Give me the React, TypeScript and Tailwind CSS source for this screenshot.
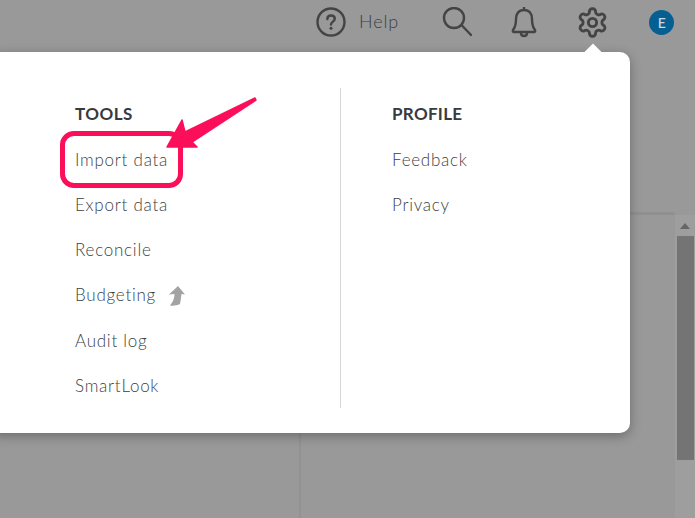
const tools = ["Import data", "Export data", "Reconcile", "Budgeting", "Audit log", "SmartLook"];
const profile = ["Feedback", "Privacy"];

function MenuItem({ label }: { label: string }) {
  return (
    <li className="flex h-[45.2px] items-center text-[17px] font-light tracking-[0.75px] text-[#3c3f43]">
      {label}
      {label === "Budgeting" && (
        <svg width="17" height="20" viewBox="0 0 17 20" className="ml-[12px] mt-[1px]">
          <path d="M10 0 L17 8.500 L13.500 8 C13 12 12.500 15 12 18 C9 19.500 5 20 2 19.500 C5 16 6.500 12 6.500 8 L1 8.500 Z" fill="#a3a3a3" />
        </svg>
      )}
    </li>
  );
}

export default function App() {
  return (
    <div className="relative h-[518px] w-[695px] overflow-hidden bg-[#999999] font-['Lato',sans-serif]">
      <header className="flex h-[44px] items-center">
        <div className="ml-[316px] flex items-center">
          <svg width="30" height="30" viewBox="0 0 30 30" fill="none" stroke="#444" strokeWidth="2.4">
            <circle cx="15" cy="15" r="13.5" />
            <path d="M11.3 12 C11.3 9.6 13 8.5 15 8.5 C17.2 8.5 18.8 9.9 18.8 11.8 C18.8 14.6 15 14.6 15 17.6" strokeLinecap="round" />
            <circle cx="15" cy="21.3" r="1.5" fill="#444" stroke="none" />
          </svg>
          <span className="ml-[13px] mt-[-2px] text-[18px] font-light tracking-[0.9px] text-[#3c3f43]">Help</span>
        </div>
        <svg width="30" height="30" viewBox="0 0 30 30" fill="none" stroke="#444" strokeWidth="2.4" className="ml-[43px]" strokeLinecap="round">
          <circle cx="12" cy="11" r="10" />
          <path d="M19.5 18 L29 28" />
        </svg>
        <svg width="26" height="32" viewBox="0 0 26 32" fill="none" stroke="#444" strokeWidth="2.4" className="ml-[39px]" strokeLinejoin="round">
          <path d="M13 1 V4 M13 4 C7.5 4 5 8 5 13 C5 18 4.5 21 2 24 C1.5 25 2 26 3 26 H23 C24 26 24.5 25 24 24 C21.500 21 21 18 21 13 C21 8 18.500 4 13 4 Z" />
          <path d="M10 27 C10 31 16 31 16 27" />
        </svg>
        <svg width="33" height="33" viewBox="0 0 24 24" fill="none" stroke="#444" strokeWidth="2.1" className="ml-[39px]" strokeLinecap="round" strokeLinejoin="round">
          <circle cx="12" cy="12" r="3" />
          <path d="M12.22 2h-.44a2 2 0 0 0-2 2v.18a2 2 0 0 1-1 1.73l-.43.25a2 2 0 0 1-2 0l-.15-.08a2 2 0 0 0-2.73.73l-.22.38a2 2 0 0 0 .73 2.73l.15.1a2 2 0 0 1 1 1.72v.51a2 2 0 0 1-1 1.74l-.15.09a2 2 0 0 0-.73 2.73l.22.38a2 2 0 0 0 2.73.73l.15-.08a2 2 0 0 1 2 0l.43.25a2 2 0 0 1 1 1.73V20a2 2 0 0 0 2 2h.44a2 2 0 0 0 2-2v-.18a2 2 0 0 1 1-1.73l.43-.25a2 2 0 0 1 2 0l.15.08a2 2 0 0 0 2.73-.73l.22-.39a2 2 0 0 0-.73-2.73l-.15-.08a2 2 0 0 1-1-1.74v-.5a2 2 0 0 1 1-1.74l.15-.09a2 2 0 0 0 .73-2.73l-.22-.38a2 2 0 0 0-2.73-.73l-.15.08a2 2 0 0 1-2 0l-.43-.25a2 2 0 0 1-1-1.73V4a2 2 0 0 0-2-2z" />
        </svg>
        <div className="ml-[40px] flex h-[25px] w-[25px] items-center justify-center rounded-full bg-[#055f91] text-[14px] font-medium text-[#c9d9e3]">
          E
        </div>
      </header>

      {/* page behind the overlay */}
      <div className="absolute left-0 top-[212px] flex h-[306px] w-[695px]">
        <div className="h-full w-[301px] border-r-2 border-[#929292]" />
        <div className="h-full w-[374px] rounded-tr-[3px] border-t-[3px] border-[#909090] bg-[#999999]" />
        <div className="mt-[3px] flex h-[303px] w-[20px] flex-col items-center bg-[#9e9e9e] pt-[8px]">
          <div className="h-0 w-0 border-x-[5px] border-b-[6px] border-x-transparent border-b-[#666]" />
          <div className="mt-[7px] h-[224px] w-[17px] bg-[#747474]" />
        </div>
      </div>

      {/* settings popup */}
      <div className="absolute left-[-10px] top-[52px] flex h-[381px] w-[640px] rounded-[10px] bg-white pl-[85px] pt-[36px] shadow-[0_3px_12px_rgba(0,0,0,0.3)]">
        <div className="absolute left-[597px] top-[-6px] h-3 w-3 rotate-45 bg-white" />
        <div className="h-[320px] w-[266px] border-r border-[#d5d6d8] pt-[13px]">
          <h3 className="h-[25px] text-[17px] font-bold leading-[25px] tracking-[0.5px] text-[#393a3d]">TOOLS</h3>
          <ul className="mt-[11px]">
            {tools.map((t) => (
              <MenuItem key={t} label={t} />
            ))}
          </ul>
        </div>
        <div className="ml-[51px] pt-[13px]">
          <h3 className="h-[25px] text-[17px] font-bold leading-[25px] tracking-[0.3px] text-[#393a3d]">PROFILE</h3>
          <ul className="mt-[11px]">
            {profile.map((t) => (
              <MenuItem key={t} label={t} />
            ))}
          </ul>
        </div>
      </div>

      {/* annotation */}
      <div className="absolute left-[60px] top-[131px] h-[57px] w-[123px] rounded-[14px] border-[5px] border-[#fb0f5a]" />
      <svg width="100" height="70" viewBox="0 0 100 70" className="absolute left-[165px] top-[95px]">
        <path d="M90 3 L91 5 L27 47 L32 52 L2 52 L17 25 L20 37 Z" fill="#fb0f5a" stroke="#fb0f5a" strokeWidth="1.500" strokeLinejoin="round" />
      </svg>
    </div>
  );
}
